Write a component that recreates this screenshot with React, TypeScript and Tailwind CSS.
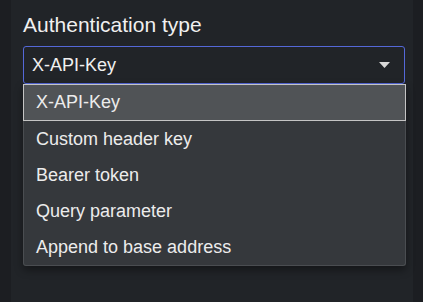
import React from "react";

const items = ["X-API-Key", "Custom header key", "Bearer token", "Query parameter", "Append to base address"];

export default function App() {
  return (
    <div className="flex h-[302px] w-[423px] bg-[#1c1e22]" style={{ fontFamily: '"Liberation Sans", Arial, sans-serif' }}>
      <div className="ml-[11px] w-[402px] bg-[#212428] pl-3 pr-[7px] pt-[12px]">
        <div className="text-[21px] leading-[26px] text-[#f0f0f0]">Authentication type</div>
        <div className="relative mt-[8px]">
          <div className="flex h-[38px] w-[382px] items-center justify-between rounded-[3px] border border-[#5468d8] pl-[8px] pr-[14px] text-[18px] text-[#f0f0f0]">
            <span>X-API-Key</span>
            <svg width="11" height="6" viewBox="0 0 11 6"><path d="M0 0h11L5.5 6z" fill="#d8d8d8" /></svg>
          </div>
          <div className="w-[383px] rounded-b-[3px] border border-[#4a4d51] border-t-0 bg-[#35383c] shadow-[0_4px_8px_rgba(0,0,0,0.4)]">
            {items.map((t, i) => (
              <div
                key={t}
                className={
                  "flex items-center pl-[12px] text-[18px] text-[#ececec] " +
                  (i === 0 ? "h-[37px] border border-[#c4c4c4] bg-[#505356] -ml-px -mr-px" : "h-[36px]")
                }
              >
                {t}
              </div>
            ))}
          </div>
        </div>
      </div>
    </div>
  );
}
